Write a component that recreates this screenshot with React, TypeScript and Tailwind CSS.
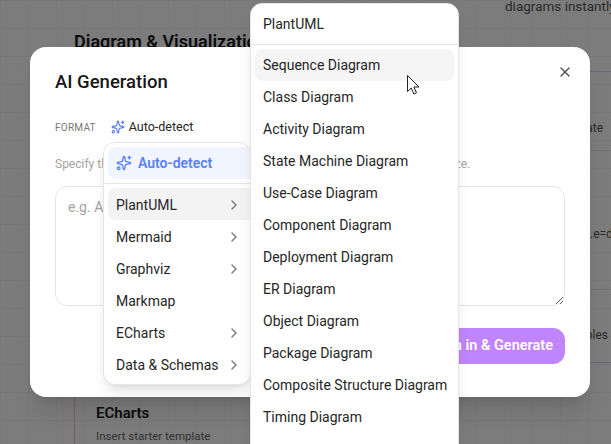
import React from "react";
import { ChevronRight, Sparkles, X } from "lucide-react";

const formats = [
  { name: "Mermaid", sub: true },
  { name: "Graphviz", sub: true },
  { name: "Markmap", sub: false },
  { name: "ECharts", sub: true },
  { name: "Data & Schemas", sub: true },
];

const plantUml = [
  "Class Diagram",
  "Activity Diagram",
  "State Machine Diagram",
  "Use-Case Diagram",
  "Component Diagram",
  "Deployment Diagram",
  "ER Diagram",
  "Object Diagram",
  "Package Diagram",
  "Composite Structure Diagram",
  "Timing Diagram",
];

function Background() {
  return (
    <div className="flex h-[444px] overflow-hidden bg-[#f8f8f8] bg-[linear-gradient(#f0f0f0_1px,transparent_1px),linear-gradient(90deg,#f0f0f0_1px,transparent_1px)] bg-[size:28px_28px]">
      <div className="w-[505px] shrink-0 pl-[74px]">
        <h2 className="mt-[30px] text-lg font-semibold leading-6 text-[#171717]">Diagram &amp; Visualization</h2>
        <div className="mt-[333px] w-[200px] border-l border-[#e9b8c4] pl-[21px] pt-[15px]">
          <p className="text-[15px] font-semibold text-[#171717]">ECharts</p>
          <p className="mt-[3px] text-[11.5px] text-[#666]">Insert starter template</p>
        </div>
      </div>
      <div className="w-[106px] shrink-0 text-xs text-[#555]">
        <p className="-mt-0.5 h-[73px] whitespace-nowrap text-[13.5px]">diagrams instantly</p>
        <div className="flex h-[79px] items-end justify-end border-t border-[#d6d0e8] pb-[14px] pr-2">template</div>
        <div className="h-[139px] whitespace-nowrap border-t border-[#e5e5e5] pl-[85px] pt-[75px]">.e=default</div>
        <div className="flex h-[73px] items-center justify-end border-t border-[#e5e5e5] pr-[3px] pt-[18px]">tables</div>
        <div className="border-t border-[#d6d0e8]" />
      </div>
    </div>
  );
}

function MainMenu() {
  return (
    <div className="absolute left-[103px] top-[142px] w-[148px] overflow-hidden rounded-xl border border-[#e5e5e5] bg-white py-1 pl-1 shadow-lg">
      <div className="flex h-8 items-center gap-[6px] rounded-l-lg bg-[#f0f5ff] px-2 text-sm font-semibold text-[#5b7ff5]">
        <Sparkles size={16} />
        Auto-detect
      </div>
      <div className="-ml-1 my-1 border-t border-[#e5e5e5]" />
      <div className="flex h-8 items-center justify-between rounded-l-lg bg-[#f3f3f3] pl-2 pr-[8px] pt-px text-sm text-[#262626]">
        PlantUML
        <ChevronRight size={16} className="text-[#777]" />
      </div>
      {formats.map((f) => (
        <div key={f.name} className="flex h-8 items-center justify-between whitespace-nowrap pl-2 pr-[8px] pt-px text-sm text-[#262626]">
          {f.name}
          {f.sub && <ChevronRight size={16} className="text-[#777]" />}
        </div>
      ))}
    </div>
  );
}

function SubMenu() {
  return (
    <div className="absolute left-[250px] top-[3px] h-[460px] w-[209px] rounded-xl border border-[#e5e5e5] bg-white shadow-lg">
      <div className="flex h-[41px] items-center border-b border-[#e5e5e5] px-3 text-sm text-[#262626]">PlantUML</div>
      <div className="p-1">
        <div className="flex h-8 items-center rounded-lg bg-[#f5f5f5] px-2 text-sm text-[#262626]">Sequence Diagram</div>
        {plantUml.map((item) => (
          <div key={item} className="flex h-8 items-center whitespace-nowrap px-2 text-sm text-[#262626]">
            {item}
          </div>
        ))}
      </div>
    </div>
  );
}

function Modal() {
  return (
    <div className="absolute left-[30px] top-[47px] h-[350px] w-[560px] rounded-2xl bg-white px-[25px] pt-[23px] shadow-xl">
      <X size={16} className="absolute right-[17px] top-[17px] text-[#525252]" />
      <h2 className="text-[18.5px] font-medium leading-6 text-[#171717]">AI Generation</h2>
      <div className="mt-[24px] flex items-center gap-[15px]">
        <span className="text-[10px] tracking-wide text-[#777]">FORMAT</span>
        <span className="flex items-center gap-1 text-[12.5px] text-[#262626]">
          <Sparkles size={14} className="text-[#5b7ff5]" />
          Auto-detect
        </span>
      </div>
      <p className="mt-[19px] whitespace-nowrap text-xs text-[#a3a3a3]">
        Specify the content, structure and details of the diagram you want to visualize.
      </p>
      <textarea
        className="mt-[14px] block h-[120px] w-full rounded-xl border border-[#e5e5e5] px-3 py-2.5 text-sm outline-none placeholder:text-[#a3a3a3]"
        placeholder="e.g. A user logging in to a website"
      />
      <div className="mt-[22px] flex justify-end">
        <button className="h-9 rounded-xl bg-[#c084fc] px-3 text-[14.5px] font-semibold text-white">Sign in &amp; Generate</button>
      </div>
    </div>
  );
}

export default function App() {
  return (
    <div className="relative h-[444px] overflow-hidden font-['Roboto',sans-serif]">
      <Background />
      <div className="absolute inset-0 bg-black/50" />
      <Modal />
      <MainMenu />
      <SubMenu />
      <svg className="absolute left-[406px] top-[74px]" width="15" height="22" viewBox="0 0 15 22">
        <path d="M1.5 1.5V17.5L5.2 14L7.8 20L10.5 18.8L7.9 13H13Z" fill="white" stroke="#222" strokeWidth="1" strokeLinejoin="round" />
      </svg>
    </div>
  );
}
